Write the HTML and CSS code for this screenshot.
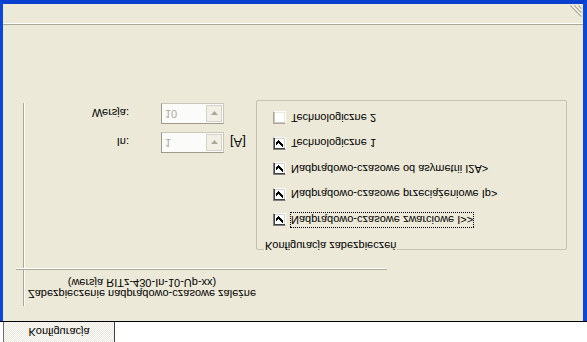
FILE: index.html
```html
<!DOCTYPE html>
<html lang="pl">
<head>
    <meta charset="UTF-8">
    <title>Konfiguracja</title>
    <link rel="stylesheet" href="styles.css">
</head>
<body>
    <div class="screen">
        <div class="tabstrip">
            <div class="tab">Konfiguracja</div>
        </div>
        <div class="window">
            <div class="client">
                <div class="panel">
                    <div class="header">
                        <div class="title">Zabezpieczenie nadprądowo-czasowe zależne<br>(wersja RITz-430-In-10-Up-xx)</div>
                    </div>
                    <div class="form">
                        <div class="row">
                            <span class="label">In:</span>
                            <div class="combo"><span class="combo-text">1</span><span class="combo-btn"><svg width="7" height="4" viewBox="0 0 7 4"><path d="M0 0h7L3.5 4z" fill="#aca899"/></svg></span></div>
                            <span class="unit">[A]</span>
                        </div>
                        <div class="row">
                            <span class="label">Wersja:</span>
                            <div class="combo"><span class="combo-text">10</span><span class="combo-btn"><svg width="7" height="4" viewBox="0 0 7 4"><path d="M0 0h7L3.5 4z" fill="#aca899"/></svg></span></div>
                        </div>
                    </div>
                </div>
                <div class="groupbox">
                    <div class="legend">Konfiguracja zabezpieczeń</div>
                    <div class="checks">
                        <div class="check"><span class="box checked"></span><span class="text focused">Nadprądowo-czasowe zwarciowe I&gt;&gt;</span></div>
                        <div class="check"><span class="box checked"></span><span class="text">Nadprądowo-czasowe przeciążeniowe Ip&gt;</span></div>
                        <div class="check"><span class="box checked"></span><span class="text">Nadprądowo-czasowe od asymetrii I2A&gt;</span></div>
                        <div class="check"><span class="box checked"></span><span class="text">Technologiczne 1</span></div>
                        <div class="check"><span class="box off"></span><span class="text">Technologiczne 2</span></div>
                    </div>
                </div>
            </div>
            <div class="statusbar">
                <svg class="grip" width="12" height="12" viewBox="0 0 12 12">
                    <path d="M11.5 0.5L0.5 11.5M11.5 4.5L4.5 11.5M11.5 8.5L8.5 11.5" stroke="#aca899" stroke-width="1.4"/>
                    <path d="M11.5 1.9L1.9 11.5M11.5 5.9L5.9 11.5M11.5 9.9L9.9 11.5" stroke="#fff" stroke-width="1"/>
                </svg>
            </div>
        </div>
    </div>
</body>
</html>
```

FILE: styles.css
```css
* {
    box-sizing: border-box;
}
body {
    margin: 0;
    background: #fff;
    font-family: "Liberation Sans", Arial, sans-serif;
    font-size: 11px;
    color: #000;
}
/* the whole capture is shown upside down */
.screen {
    width: 587px;
    height: 342px;
    overflow: hidden;
    transform: scaleY(-1);
}
.tabstrip {
    height: 21px;
    background: #fff;
    border-bottom: 1px solid #000;
    padding-left: 3px;
    display: flex;
}
.tab {
    width: 112px;
    height: 20px;
    line-height: 20px;
    text-align: center;
    border-left: 1px solid #6f6f6f;
    border-right: 1px solid #404040;
    background: repeating-conic-gradient(#fff 0 25%, #e9e6d9 0 50%) 0 0 / 2px 2px;
}
.window {
    height: 321px;
    background: #ece9d8;
    border-left: 3px solid #0b47d9;
    border-right: 4px solid #0b47d9;
    border-bottom: 4px solid #0a40d0;
    display: flex;
    flex-direction: column;
}
.client {
    height: 296px;
    display: flex;
    align-items: flex-start;
}
.panel {
    width: 233px;
    height: 203px;
    margin: 15px 0 0 20px;
    border-left: 1px solid #aca899;
    box-shadow: inset 1px 0 #fff;
}
.header {
    width: 371px;
    margin-left: -8px;
    padding: 7px 0;
    border-bottom: 1px solid #aca899;
    box-shadow: 0 1px #fff;
}
.title {
    width: 252px;
    line-height: 11px;
    text-align: center;
}
.form {
    margin-top: 116px;
    display: flex;
    flex-direction: column;
    gap: 8px;
}
.row {
    display: flex;
    align-items: center;
    height: 21px;
}
.label {
    width: 105px;
    text-align: right;
}
.combo {
    width: 63px;
    height: 21px;
    margin-left: 32px;
    border: 1px solid #b5b2a3;
    border-color: #9d9a8c #c9c7ba #c9c7ba #9d9a8c;
    background: #fbfbf9;
    display: flex;
    align-items: stretch;
}
.combo-text {
    flex: 1;
    padding-left: 3px;
    line-height: 19px;
    color: #aca899;
}
.combo-btn {
    width: 16px;
    margin: 1px;
    border: 1px solid #d6d3c6;
    background: #f1efe6;
    display: flex;
    align-items: center;
    justify-content: center;
}
.unit {
    margin-left: 6px;
    font-size: 13px;
}
.groupbox {
    width: 311px;
    height: 150px;
    margin-top: 71px;
    padding-left: 16px;
    border: 1px solid #c5c2b2;
    border-radius: 2px;
}
.legend {
    width: max-content;
    margin: -3px 0 0 -9px;
    padding: 0 1px;
    line-height: 13px;
    background: #ece9d8;
}
.checks {
    margin-top: 11px;
    display: flex;
    flex-direction: column;
    gap: 9.5px;
}
.check {
    height: 16px;
    display: flex;
    align-items: center;
}
.box {
    width: 13px;
    height: 13px;
    background: #fff;
    border: 1px solid;
    border-color: #808080 #fff #fff #808080;
    box-shadow: inset 1px 1px #404040, inset -1px -1px #d4d0c8;
}
.box.off {
    border-color: #aca899 #fff #fff #aca899;
    box-shadow: inset 1px 1px #c9c7ba, inset -1px -1px #ece9d8;
}
.box.checked {
    background: #fff url("data:image/svg+xml;utf8,<svg xmlns='http://www.w3.org/2000/svg' width='11' height='11' viewBox='0 0 11 11'><path d='M2 4h1v1h1v1h1V5h1V4h1V3h1V2h1v3H8v1H7v1H6v1H5v1H4V8H3V7H2z' fill='black'/></svg>") no-repeat 0 0;
}
.text {
    margin-left: 4px;
    line-height: 14px;
    border: 1px dotted transparent;
}
.text.focused {
    border-color: #000;
}
.statusbar {
    height: 21px;
    border-top: 1px solid #aca899;
    box-shadow: inset 0 1px #fff;
    display: flex;
    justify-content: flex-end;
    align-items: flex-end;
    padding: 0 1px 1px 0;
}
```
